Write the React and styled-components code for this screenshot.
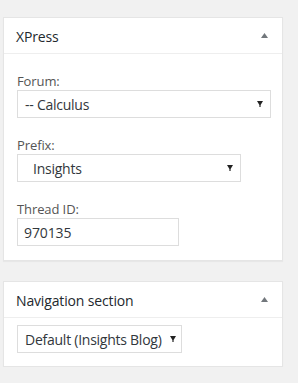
import React from 'react'
import styled, { createGlobalStyle } from 'styled-components'

const GlobalStyle = createGlobalStyle`
    html, body {
        margin: 0;
        background: #f1f1f1;
    }
    body {
        font-family: "Open Sans", "Noto Sans", sans-serif;
        color: #444;
    }
`

const Sidebar = styled.div`
    width: 280px;
    padding: 17px 0 0 3px;
    display: flex;
    flex-direction: column;
    gap: 20px;
`

const Postbox = styled.div`
    background: #fff;
    border: 1px solid #e5e5e5;
    box-shadow: 0 1px 1px rgba(0, 0, 0, 0.04);
`

const Header = styled.div`
    height: 35px;
    border-bottom: 1px solid #eee;
    display: flex;
    align-items: center;
    justify-content: space-between;
    padding: 0 14px 0 12px;
`

const Title = styled.h2`
    margin: 0;
    font-size: 14px;
    font-weight: 400;
    color: #23282d;
    line-height: 1;
    padding-top: 2px;
    letter-spacing: -0.15px;
`

const Toggle = styled.svg`
    width: 7px;
    height: 5px;
    fill: #72777c;
`

const Inside = styled.div`
    padding: ${p => p.$pad || '18px 13px 14px'};
    display: flex;
    flex-direction: column;
    gap: 18px;
`

const Field = styled.div`
    display: flex;
    flex-direction: column;
`

const Label = styled.label`
    font-size: 13px;
    line-height: 18px;
    color: #555;
    letter-spacing: -0.1px;
`

const SelectBox = styled.div`
    box-sizing: border-box;
    width: ${p => p.$width}px;
    height: 28px;
    border: 1px solid #ddd;
    background: #fff;
    display: flex;
    align-items: center;
    justify-content: space-between;
    padding: 0 7px 0 ${p => p.$indent || 7}px;
    font-size: 14px;
    letter-spacing: -0.25px;
    color: #32373c;
    white-space: nowrap;
    overflow: hidden;
`

const Arrow = styled.svg`
    width: 6px;
    height: 6px;
    fill: #222;
    flex: none;
    margin-left: 8px;
`

const TextInput = styled.div`
    box-sizing: border-box;
    width: 162px;
    height: 28px;
    border: 1px solid #ddd;
    background: #fff;
    display: flex;
    align-items: center;
    padding: 0 6px;
    font-size: 14px;
    letter-spacing: -0.1px;
    color: #32373c;
`

function Select({ width, indent, children }) {
    return (
        <SelectBox $width={width} $indent={indent}>
            <span>{children}</span>
            <Arrow viewBox="0 0 6 6">
                <path d="M0 0 H6 L3.6 4 V6 H2.4 V4 Z" />
            </Arrow>
        </SelectBox>
    )
}

function BoxHeader({ title }) {
    return (
        <Header>
            <Title>{title}</Title>
            <Toggle viewBox="0 0 7 5">
                <path d="M3.5 0 L7 5 H0 Z" />
            </Toggle>
        </Header>
    )
}

export default function App() {
    return (
        <>
            <GlobalStyle />
            <Sidebar>
                <Postbox>
                    <BoxHeader title="XPress" />
                    <Inside>
                        <Field>
                            <Label>Forum:</Label>
                            <Select width={254}>-- Calculus</Select>
                        </Field>
                        <Field>
                            <Label>Prefix:</Label>
                            <Select width={224} indent={15}>Insights</Select>
                        </Field>
                        <Field>
                            <Label>Thread ID:</Label>
                            <TextInput>970135</TextInput>
                        </Field>
                    </Inside>
                </Postbox>
                <Postbox>
                    <BoxHeader title="Navigation section" />
                    <Inside $pad="7px 13px 13px">
                        <Select width={165}>Default (Insights Blog)</Select>
                    </Inside>
                </Postbox>
            </Sidebar>
        </>
    )
}
